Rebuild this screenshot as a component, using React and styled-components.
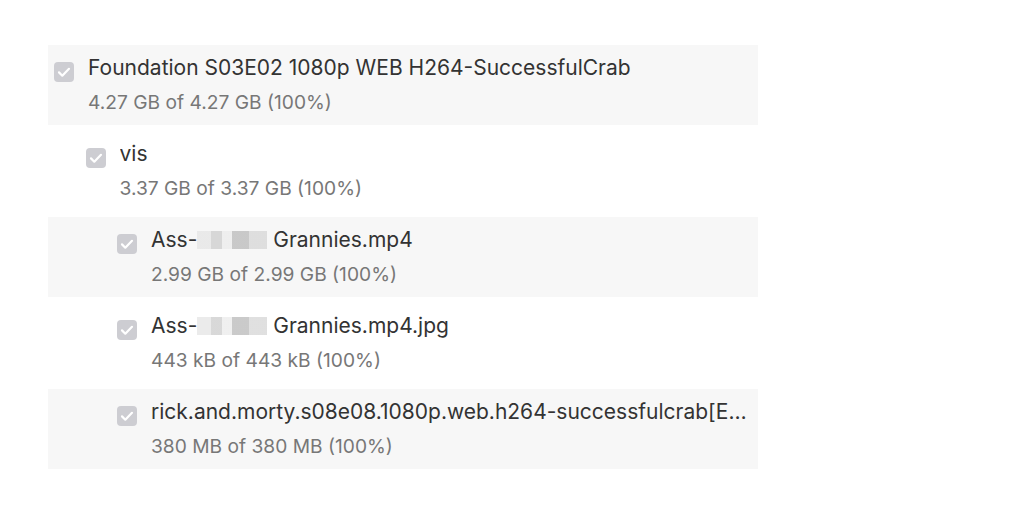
import styled, { createGlobalStyle } from "styled-components";

const GlobalStyle = createGlobalStyle`
  body {
    margin: 0;
    background: #fff;
    font-family: Inter, "Noto Sans", sans-serif;
  }
`;

const files = [
  {
    depth: 0,
    name: "Foundation S03E02 1080p WEB H264-SuccessfulCrab",
    progress: "4.27 GB of 4.27 GB (100%)",
  },
  { depth: 1, name: "vis", progress: "3.37 GB of 3.37 GB (100%)" },
  {
    depth: 2,
    name: ["Ass-", " Grannies.mp4"],
    progress: "2.99 GB of 2.99 GB (100%)",
  },
  {
    depth: 2,
    name: ["Ass-", " Grannies.mp4.jpg"],
    progress: "443 kB of 443 kB (100%)",
  },
  {
    depth: 2,
    name: "rick.and.morty.s08e08.1080p.web.h264-successfulcrab[EZTVx.to].mkv",
    progress: "380 MB of 380 MB (100%)",
  },
];

const FileTree = () => {
  return (
    <Page>
      <GlobalStyle />
      <List>
        {files.map((file, i) => (
          <Row key={i} $depth={file.depth} $striped={i % 2 === 0}>
            <Check>
              <svg width="20" height="20" viewBox="0 0 20 20">
                <path
                  d="M5 10.4l3.3 3.3L15 6.8"
                  fill="none"
                  stroke="#fff"
                  strokeWidth="2.2"
                  strokeLinecap="round"
                  strokeLinejoin="round"
                />
              </svg>
            </Check>
            <Info>
              <Name>
                {Array.isArray(file.name) ? (
                  <>
                    {file.name[0]}
                    <Censored />
                    {file.name[1]}
                  </>
                ) : (
                  file.name
                )}
              </Name>
              <Progress>{file.progress}</Progress>
            </Info>
          </Row>
        ))}
      </List>
    </Page>
  );
};

export default FileTree;

const Page = styled.div`
  padding: 45px 48px;
`;

const List = styled.div`
  width: 710px;
  display: flex;
  flex-direction: column;
  gap: 6px;
`;

const Row = styled.div`
  height: 80px;
  box-sizing: border-box;
  display: flex;
  align-items: flex-start;
  gap: 14px;
  padding: 9px 0 0 ${(p) => 6 + p.$depth * 31.5}px;
  background: ${(p) => (p.$striped ? "#f7f7f7" : "#fff")};
`;

const Check = styled.div`
  flex: none;
  width: 20px;
  height: 20px;
  margin-top: 8px;
  border-radius: 4px;
  background: #cdcdd2;
`;

const Info = styled.div`
  min-width: 0;
  flex: 1;
  display: flex;
  flex-direction: column;
`;

const Name = styled.div`
  font-size: 21px;
  line-height: 27px;
  color: #333;
  white-space: nowrap;
  overflow: hidden;
  text-overflow: ellipsis;
`;

const Progress = styled.div`
  margin-top: 10px;
  font-size: 19.2px;
  line-height: 22px;
  color: #777;
`;

const Censored = styled.span`
  display: inline-block;
  width: 70px;
  height: 18px;
  vertical-align: -2px;
  background: linear-gradient(
    90deg,
    #e6e6e6 0 20%,
    #cfcfcf 20% 35%,
    #ececec 35% 50%,
    #bdbdbd 50% 75%,
    #d8d8d8 75% 100%
  );
  opacity: 0.8;
`;
